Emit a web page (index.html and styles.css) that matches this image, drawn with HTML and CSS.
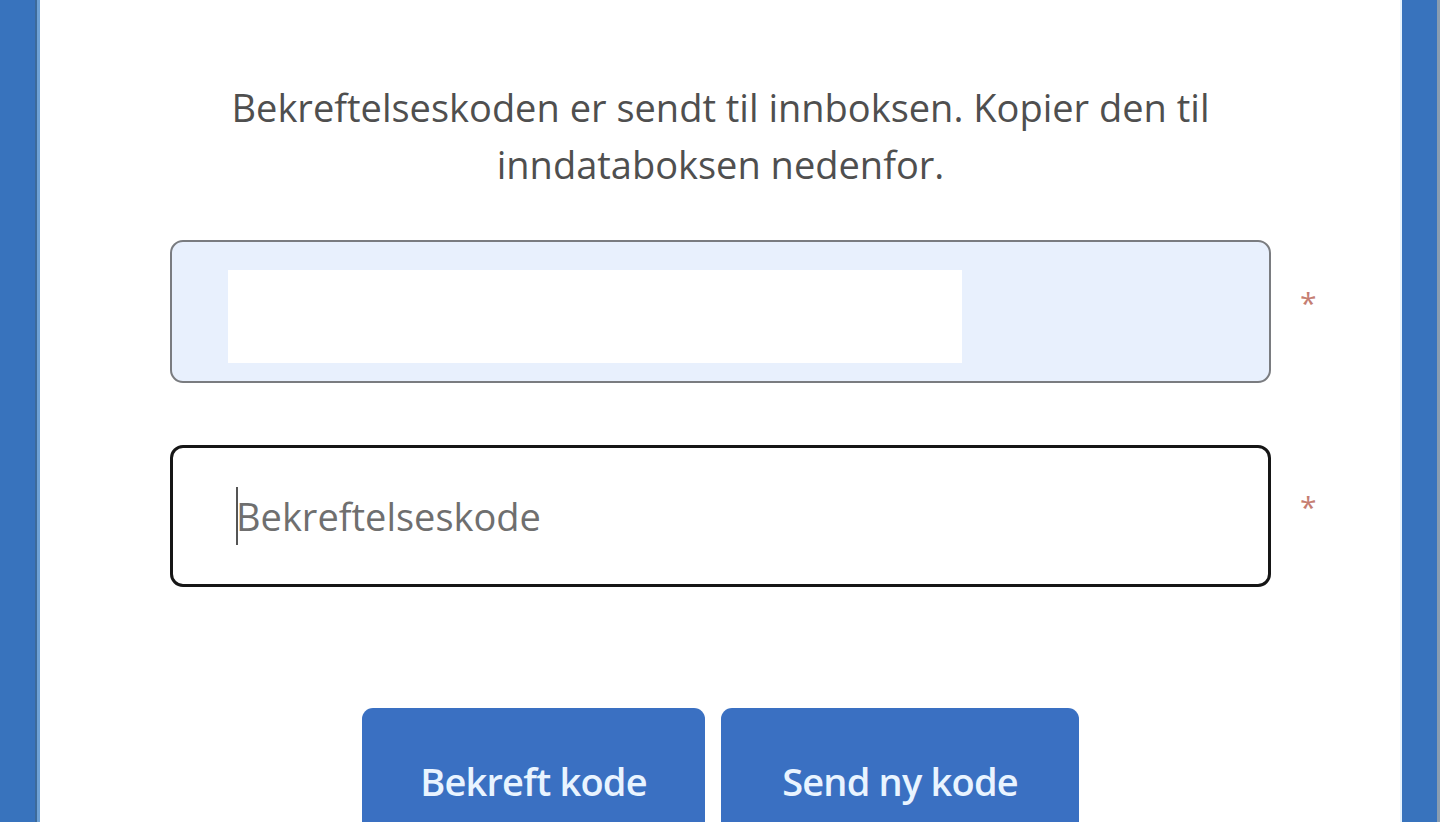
FILE: index.html
```html
<!DOCTYPE html>
<html lang="no">
<head>
<meta charset="utf-8">
<link rel="stylesheet" href="styles.css">
</head>
<body>
<div class="page">
  <div class="stripe stripe-left"></div>
  <main class="card">
    <p class="intro">Bekreftelseskoden er sendt til innboksen. Kopier den til<br>inndataboksen nedenfor.</p>
    <div class="row">
      <div class="field field-email"><div class="mask"></div></div>
      <span class="req">*</span>
    </div>
    <div class="row row-code">
      <div class="field field-code"><span class="caret"></span><span class="placeholder">Bekreftelseskode</span></div>
      <span class="req">*</span>
    </div>
    <div class="buttons">
      <button class="btn btn-verify">Bekreft kode</button>
      <button class="btn btn-resend">Send ny kode</button>
    </div>
  </main>
  <div class="stripe stripe-right"></div>
</div>
</body>
</html>
```

FILE: styles.css
```css
html, body {
  margin: 0;
  padding: 0;
  height: 100%;
  overflow: hidden;
}
body {
  font-family: "Open Sans", "Noto Sans", "Liberation Sans", sans-serif;
  background: #fff;
}
.page {
  display: flex;
  height: 822px;
}
.stripe {
  width: 40px;
  flex: none;
  background: #3873bd;
}
.stripe-left {
  box-shadow: inset -3px 0 0 #6fa2d6, inset -5px 0 0 #3d6a9a;
  width: 40px;
}
.stripe-right {
  width: 40px;
  box-shadow: inset 2px 0 0 #e7f4ff, inset -3px 0 0 #8a9db0;
}
.card {
  flex: 1;
  background: #fff;
  padding: 79px 0 0 130px;
  box-sizing: border-box;
}
.intro {
  margin: 0;
  width: 1101px;
  text-align: center;
  font-size: 38px;
  line-height: 57px;
  color: #4f4f4f;
}
.row {
  display: flex;
  align-items: center;
  margin-top: 47px;
}
.row-code {
  margin-top: 62px;
}
.field {
  width: 1101px;
  height: 143px;
  box-sizing: border-box;
  border-radius: 13px;
  display: flex;
  align-items: center;
}
.field-email {
  background: #e8f0fd;
  border: 2px solid #7a7c80;
  padding: 28px 0 0 56px;
  align-items: flex-start;
}
.mask {
  width: 734px;
  height: 93px;
  background: #fff;
}
.field-code {
  background: #fff;
  border: 3px solid #161616;
  height: 142px;
  padding-left: 63px;
}
.caret {
  width: 2px;
  height: 58px;
  background: #555;
  margin-right: -2px;
}
.placeholder {
  font-size: 38px;
  color: #6f6f6f;
}
.req {
  margin-left: 29px;
  font-size: 30px;
  color: #c57e72;
  line-height: 1;
  margin-top: -18px;
}
.buttons {
  display: flex;
  gap: 16px;
  margin: 121px 0 0 192px;
}
.btn {
  height: 146px;
  border: none;
  border-radius: 11px;
  background: #3a70c2;
  color: #e9f4ff;
  font-family: "Open Sans", "Noto Sans", "Liberation Sans", sans-serif;
  font-size: 38px;
  font-weight: 600;
  letter-spacing: -0.8px;
  padding: 0;
  box-sizing: border-box;
}
.btn-verify {
  width: 343px;
}
.btn-resend {
  width: 358px;
}
```
